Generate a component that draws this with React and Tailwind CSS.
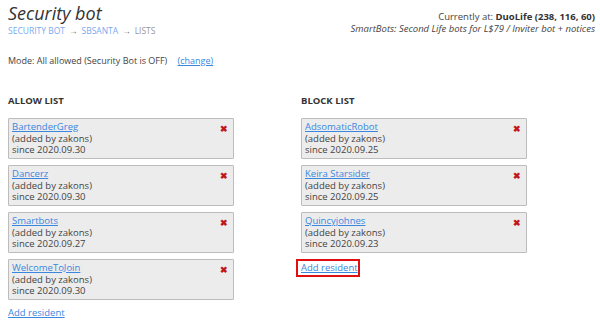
import React from "react";

const allow = [
  ["BartenderGreg", "2020.09.30"],
  ["Dancerz", "2020.09.30"],
  ["Smartbots", "2020.09.27"],
  ["WelcomeToJoin", "2020.09.30"],
];
const block = [
  ["AdsomaticRobot", "2020.09.25"],
  ["Keira Starsider", "2020.09.25"],
  ["Quincyjohnes", "2020.09.23"],
];

function Card({ name, date }) {
  return (
    <div className="relative w-[226px] h-[41px] bg-[#ececec] border border-[#bcbcbc] rounded-[1px] pl-[3px] pt-[2px] leading-[11.5px] text-[9.5px] text-[#444]">
      <a className="text-[#3a87e0] underline block">{name}</a>
      <div>(added by zakons)</div>
      <div>since {date}</div>
      <span className="absolute right-[5px] top-[5px] text-[#c0171b] text-[9px] font-bold leading-none">✖</span>
    </div>
  );
}

export default function App() {
  return (
    <div className="w-[600px] h-[325px] bg-white overflow-hidden text-[#444]" style={{ fontFamily: '"Open Sans", sans-serif' }}>
      <div className="flex justify-between px-[8px] pt-[1px]">
        <div>
          <div className="italic text-[18px] leading-[25px] text-[#333]">Security bot</div>
          <div className="text-[8.5px] leading-[10px] flex items-center gap-[4px]">
            <span className="text-[#7aa9ee]">SECURITY BOT</span>
            <span className="text-[#777]">→</span>
            <span className="text-[#7aa9ee]">SBSANTA</span>
            <span className="text-[#777]">→</span>
            <span className="text-[#999]">LISTS</span>
          </div>
        </div>
        <div className="text-right text-[9.5px] leading-[11.5px] pt-[10px] mr-[-3px]">
          <div>Currently at: <b className="text-[#333]">DuoLife (238, 116, 60)</b></div>
          <div className="italic">SmartBots: Second Life bots for L$79 / Inviter bot + notices</div>
        </div>
      </div>
      <div className="px-[8px] mt-[19px] text-[9px] leading-[12px]">
        Mode: All allowed (Security Bot is OFF) <a className="ml-[8px] text-[#3a87e0] underline">(change)</a>
      </div>
      <div className="flex px-[8px] mt-[28px]">
        <div className="w-[293px]">
          <div className="text-[9.5px] font-bold leading-[12px] text-[#333] mb-[11px]">ALLOW LIST</div>
          <div className="flex flex-col gap-[6px]">
            {allow.map(([n, d]) => <Card key={n} name={n} date={d} />)}
          </div>
          <a className="block mt-[7px] text-[9.5px] leading-[12px] text-[#3a87e0] underline">Add resident</a>
        </div>
        <div>
          <div className="text-[9.5px] font-bold leading-[12px] text-[#333] mb-[11px]">BLOCK LIST</div>
          <div className="flex flex-col gap-[6px]">
            {block.map(([n, d]) => <Card key={n} name={n} date={d} />)}
          </div>
          <div className="mt-[6px] ml-[-5px] w-[64px] h-[18px] border-2 border-[#e01010] flex items-center pl-[3px]">
            <a className="text-[9.5px] leading-[12px] text-[#3a87e0] underline">Add resident</a>
          </div>
        </div>
      </div>
    </div>
  );
}
